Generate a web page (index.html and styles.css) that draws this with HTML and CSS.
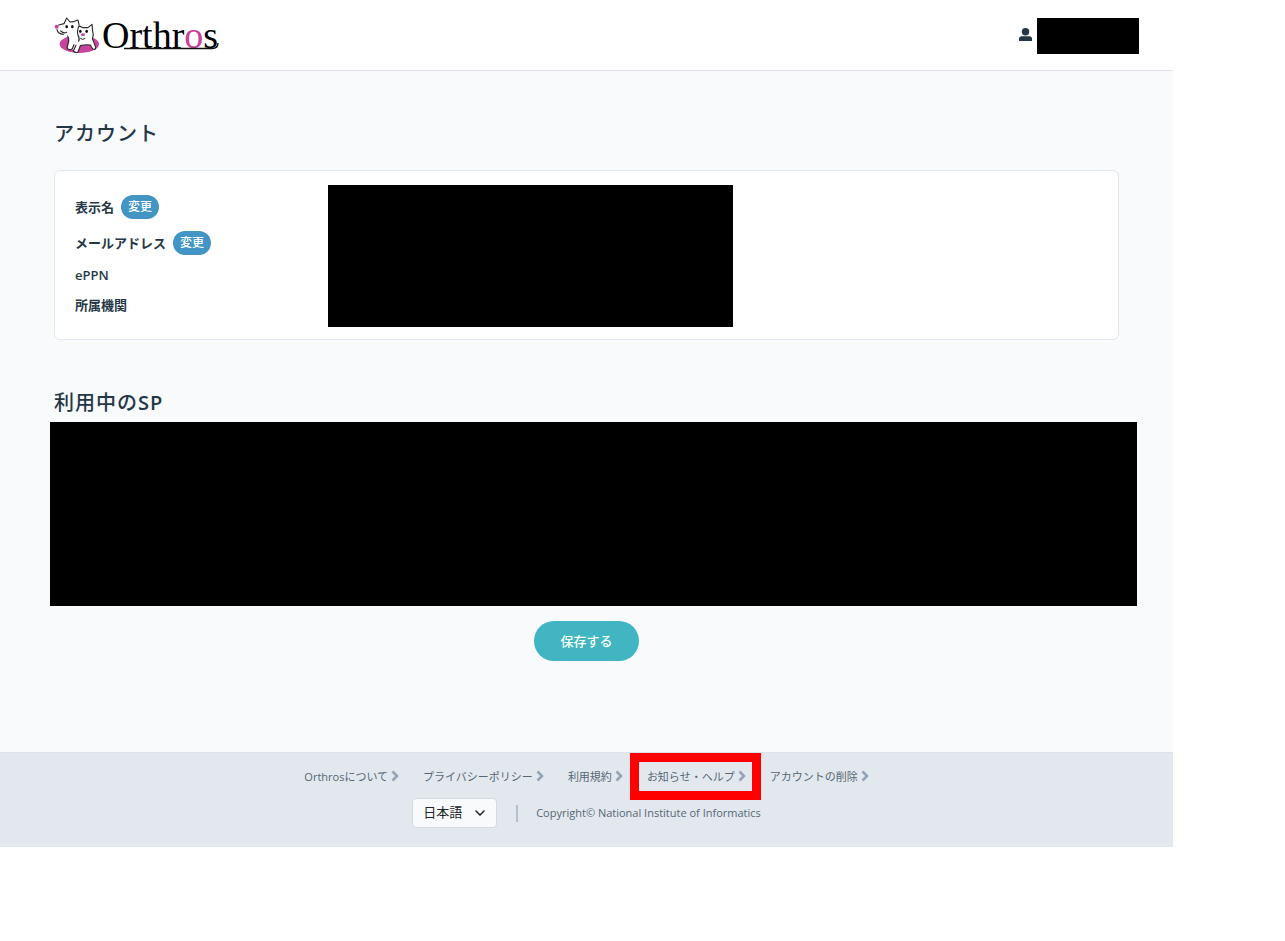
FILE: index.html
```html
<!DOCTYPE html>
<html lang="ja">
<head>
  <meta charset="UTF-8">
  <meta name="viewport" content="width=device-width, initial-scale=1.0">
  <title>Orthros</title>
  <link rel="stylesheet" href="styles.css">
</head>
<body>
  <svg class="sprite" aria-hidden="true">
    <symbol id="chevron" viewBox="0 0 8 12">
      <path d="M1.5 1.5 L6 6 L1.5 10.5" fill="none" stroke="currentColor" stroke-width="2.6"/>
    </symbol>
  </svg>

  <div class="page">
    <header class="header">
      <a href="#" class="logo">
        <svg class="logo-mark" viewBox="0 0 165 138" aria-hidden="true">
          <ellipse cx="88" cy="96" rx="59" ry="27" fill="#c9429b"/>
          <path d="M19 44 L38 36 L50 19 L61 29 L71 29 L83 24 L88 40 L99 46 L114 45 L125 36 L129 60 L126 80 L133 92 L137 109 L128 112 L121 99 L103 99 L91 101 L84 121 L72 120 L70 112 L57 113 L52 107 L56 86 L53 68 L35 69 L22 60 Z" fill="#fff"/>
          <path d="M26 39 L42 35 L50 18 L60 30 L70 29 L84 24 L87 38 M21 53 Q24 66 40 67 M32 57 Q42 66 50 61 M53 72 Q59 84 54 96 L51 108 Q58 117 67 110 L72 98 M87 41 Q80 58 84 70 Q90 78 86 88 M78 100 L70 117 Q77 124 84 120 L91 101 Q106 97 121 99 L128 111 Q140 115 136 103 L127 80 Q132 68 128 58 L126 37 L114 47 L99 47 L87 41" fill="none" stroke="#2a2a2a" stroke-width="3.4" stroke-linejoin="round" stroke-linecap="round"/>
          <g fill="#111">
            <ellipse cx="50" cy="44" rx="4" ry="5"/>
            <ellipse cx="67" cy="44" rx="4" ry="5"/>
            <ellipse cx="91" cy="58" rx="4" ry="5"/>
            <ellipse cx="110" cy="58" rx="4" ry="5"/>
          </g>
          <circle cx="20" cy="44" r="6" fill="#c9429b"/>
          <ellipse cx="99" cy="68" rx="6" ry="4" fill="#c9429b"/>
          <path d="M91 79 Q98 85 106 79" fill="none" stroke="#222" stroke-width="3"/>
        </svg>
        <span class="logo-text">Orthr<span class="pink">o</span>s</span>
        <svg class="logo-line" viewBox="0 0 96 14" aria-hidden="true">
          <path d="M0 12.5 H88 Q94 12.5 94 7" fill="none" stroke="#111" stroke-width="1.4"/>
        </svg>
      </a>
      <div class="user">
        <svg class="user-icon" viewBox="0 0 14 14" aria-hidden="true">
          <circle cx="7" cy="4" r="4"/>
          <path d="M0 14 V12 Q0 9 3 9 H11 Q14 9 14 12 V14 Z"/>
        </svg>
        <span class="user-name"></span>
      </div>
    </header>

    <main class="main">
      <h2>アカウント</h2>
      <section class="card">
        <ul class="labels">
          <li>表示名 <button type="button" class="change">変更</button></li>
          <li>メールアドレス <button type="button" class="change">変更</button></li>
          <li class="plain">ePPN</li>
          <li class="plain">所属機関</li>
        </ul>
        <div class="values"></div>
      </section>

      <h2 class="sp-title">利用中の<span class="latin">SP</span></h2>
      <div class="sp-list"></div>
      <button type="button" class="save">保存する</button>
    </main>

    <footer class="footer">
      <nav class="links">
        <a href="#">Orthrosについて <svg><use href="#chevron"/></svg></a>
        <a href="#">プライバシーポリシー <svg><use href="#chevron"/></svg></a>
        <a href="#">利用規約 <svg><use href="#chevron"/></svg></a>
        <a href="#" class="marked">お知らせ・ヘルプ <svg><use href="#chevron"/></svg></a>
        <a href="#">アカウントの削除 <svg><use href="#chevron"/></svg></a>
      </nav>
      <div class="bottom">
        <div class="lang">
          <select aria-label="言語">
            <option>日本語</option>
            <option>English</option>
          </select>
          <svg viewBox="0 0 10 6" aria-hidden="true">
            <path d="M1 1 L5 5 L9 1" fill="none" stroke="#212529" stroke-width="1.5" stroke-linecap="round"/>
          </svg>
        </div>
        <p class="copy">Copyright© National Institute of Informatics</p>
      </div>
    </footer>
  </div>
</body>
</html>
```
FILE: styles.css
```css
* {
  box-sizing: border-box;
}

body {
  margin: 0;
  background: #fff;
  color: #253746;
  font-family: "Open Sans", "Noto Sans CJK JP", sans-serif;
  font-size: 13px;
}

button,
select {
  font-family: inherit;
}

.sprite {
  display: none;
}

.page {
  margin-right: 112px;
  background: #f8fafc;
}

/* Header */
.header {
  display: flex;
  justify-content: space-between;
  align-items: center;
  height: 71px;
  padding: 0 34px 0 50px;
  background: #fff;
  border-bottom: 1px solid #e2e6eb;
}

.logo {
  position: relative;
  display: flex;
  align-items: center;
  color: #000;
  text-decoration: none;
}

.logo-mark {
  width: 55px;
  height: 46px;
}

.logo-text {
  margin-left: -3px;
  font-family: "Liberation Serif", serif;
  font-size: 38px;
  line-height: 46px;
}

.pink {
  color: #c9429b;
}

.logo-line {
  position: absolute;
  right: -2px;
  bottom: 8px;
  width: 96px;
  height: 14px;
}

.user {
  display: flex;
  align-items: center;
  gap: 5px;
  padding-top: 1px;
}

.user-icon {
  width: 13px;
  height: 13px;
  margin-bottom: 2px;
  fill: #253746;
}

.user-name {
  width: 102px;
  height: 36px;
  background: #000;
}

/* Main */
.main {
  padding: 47px 54px 91px;
}

h2 {
  margin: 0 0 21px;
  font-size: 20px;
  font-weight: 500;
  line-height: 31px;
  letter-spacing: 1px;
}

.latin {
  font-weight: 600;
}

.card {
  display: flex;
  padding: 18px 20px;
  background: #fff;
  border: 1px solid #e2e8f0;
  border-radius: 6px;
}

.labels {
  width: 253px;
  margin: 0;
  padding: 0;
  list-style: none;
  font-weight: 600;
  line-height: 18px;
}

.labels li {
  display: flex;
  align-items: center;
  gap: 7px;
  height: 36px;
}

.labels .plain {
  height: 30px;
  padding-bottom: 2px;
}

.change {
  height: 24px;
  padding: 0 7px;
  border: 0;
  border-radius: 12px;
  background: #4295c4;
  color: #fff;
  font-size: 12px;
  font-weight: 500;
  line-height: 24px;
}

.values {
  width: 405px;
  margin: -4px 0 -6px;
  background: #000;
}

.sp-title {
  margin: 47px 0 4px;
}

.sp-list {
  height: 184px;
  margin: 0 -18px 0 -4px;
  background: #000;
}

.save {
  display: block;
  width: 105px;
  height: 40px;
  margin: 15px auto 0;
  padding: 0 0 2px;
  border: 0;
  border-radius: 20px;
  background: #41b6c2;
  color: #fff;
  font-size: 13px;
  font-weight: 500;
}

/* Footer */
.footer {
  padding: 9px 0 19px;
  background: #e3e8ef;
  border-top: 1px solid #dae3ea;
  color: #566773;
  font-size: 11px;
}

.links {
  display: flex;
  justify-content: center;
  gap: 24px;
}

.links a {
  display: flex;
  align-items: center;
  gap: 3px;
  height: 28px;
  color: inherit;
  text-decoration: none;
}

.links svg {
  width: 8px;
  height: 12px;
  color: #94a3b8;
}

.marked {
  position: relative;
}

.marked::after {
  content: "";
  position: absolute;
  inset: -9px -15px -10px -17px;
  border: 9px solid #f00;
}

.bottom {
  display: flex;
  justify-content: center;
  align-items: center;
  margin-top: 8px;
}

.lang {
  position: relative;
}

.lang select {
  appearance: none;
  display: block;
  width: 85px;
  height: 30px;
  padding: 0 10px 2px;
  border: 1px solid #d5dae0;
  border-radius: 4px;
  background: #f8fafc;
  color: #212529;
  font-size: 13px;
}

.lang svg {
  position: absolute;
  top: 12px;
  right: 12px;
  width: 10px;
  height: 6px;
  pointer-events: none;
}

.copy {
  margin: 0 0 0 19px;
  padding: 0 0 2px 18px;
  border-left: 2px solid #b4c0d0;
  line-height: 15px;
}
```
